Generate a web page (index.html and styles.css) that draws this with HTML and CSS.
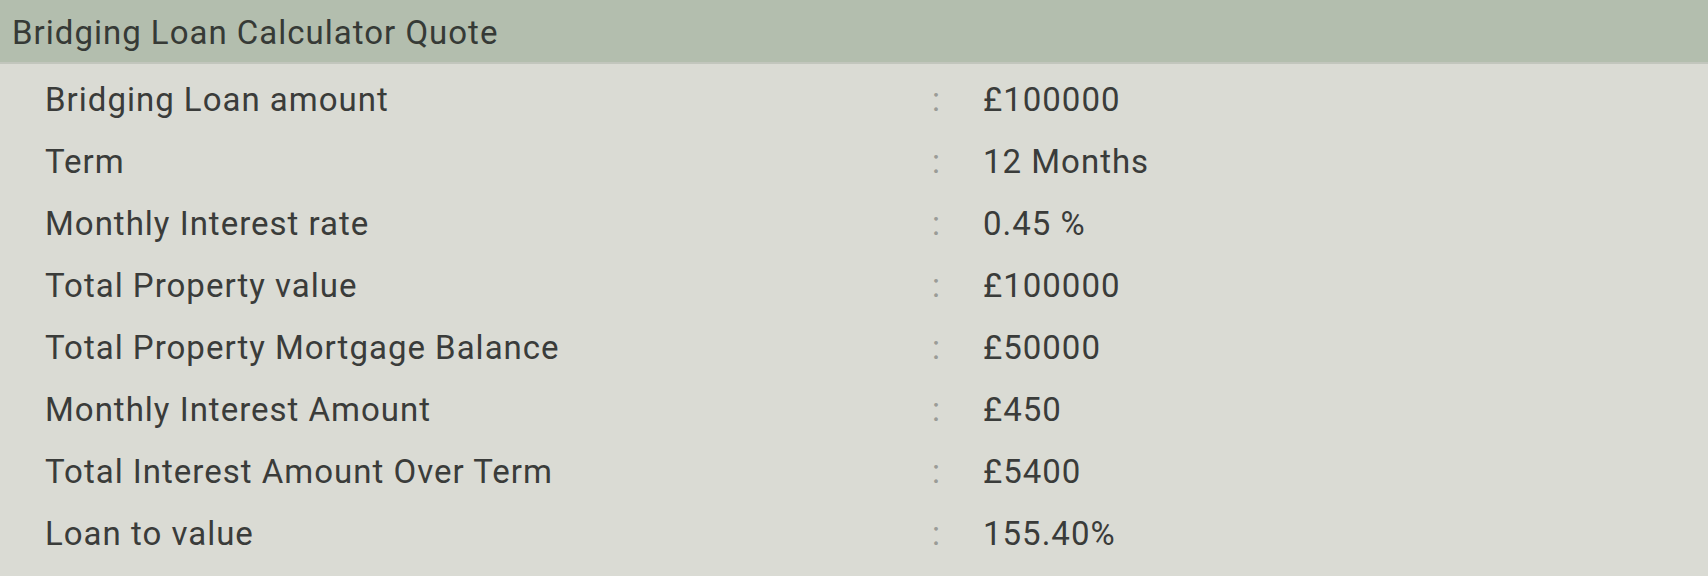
FILE: index.html
```html
<!DOCTYPE html>
<html lang="en">
<head>
<meta charset="utf-8">
<title>Bridging Loan Calculator Quote</title>
<link rel="stylesheet" href="styles.css">
</head>
<body>
<div class="panel">
  <div class="panel-head">Bridging Loan Calculator Quote</div>
  <div class="panel-body">
    <div class="row"><span class="label">Bridging Loan amount</span><span class="colon">:</span><span class="value">£100000</span></div>
    <div class="row"><span class="label">Term</span><span class="colon">:</span><span class="value">12 Months</span></div>
    <div class="row"><span class="label">Monthly Interest rate</span><span class="colon">:</span><span class="value">0.45 %</span></div>
    <div class="row"><span class="label">Total Property value</span><span class="colon">:</span><span class="value">£100000</span></div>
    <div class="row"><span class="label">Total Property Mortgage Balance</span><span class="colon">:</span><span class="value">£50000</span></div>
    <div class="row"><span class="label">Monthly Interest Amount</span><span class="colon">:</span><span class="value">£450</span></div>
    <div class="row"><span class="label">Total Interest Amount Over Term</span><span class="colon">:</span><span class="value">£5400</span></div>
    <div class="row"><span class="label">Loan to value</span><span class="colon">:</span><span class="value">155.40%</span></div>
  </div>
</div>
</body>
</html>
```
FILE: styles.css
```css
html, body {
  margin: 0;
  padding: 0;
  background: #dadbd4;
}
body {
  font-family: Roboto, "Liberation Sans", sans-serif;
  font-size: 33px;
  letter-spacing: 1px;
  color: #3a3c3a;
}
.panel {
  width: 1708px;
  height: 576px;
  background: #dadbd4;
  overflow: hidden;
}
.panel-head {
  height: 64px;
  box-sizing: border-box;
  padding-left: 12px;
  padding-top: 3px;
  display: flex;
  align-items: center;
  background: #b3beae;
  border-bottom: 2px solid #c2c6bd;
  color: #363a36;
}
.panel-body {
  padding-top: 4px;
}
.row {
  display: grid;
  grid-template-columns: 887px 51px 1fr;
  height: 62px;
  align-items: center;
  padding-left: 45px;
}
.colon {
  color: #9a9c97;
}
```
